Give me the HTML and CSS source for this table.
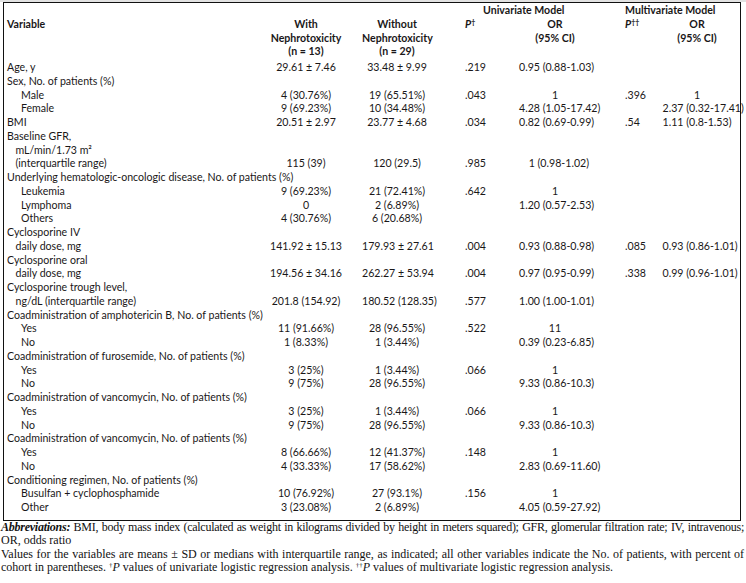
FILE: index.html
```html
<!DOCTYPE html>
<html lang="en">
<head>
<meta charset="utf-8">
<title>Table</title>
<link rel="stylesheet" href="styles.css">
</head>
<body>
<div class="strip"></div>
<table class="data">
<colgroup>
<col class="c1"><col class="c2"><col class="c3"><col class="c4"><col class="c5"><col class="c6"><col class="c7">
</colgroup>
<thead>
<tr class="h1">
<th></th><th></th><th></th>
<th colspan="2" class="uni">Univariate Model</th>
<th colspan="2" class="multi">Multivariate Model</th>
</tr>
<tr class="h2">
<th class="var">Variable</th>
<th class="ctr">With<br>Nephrotoxicity<br>(n = 13)</th>
<th class="ctr">Without<br>Nephrotoxicity<br>(n = 29)</th>
<th class="p"><i>P</i><sup>†</sup></th>
<th class="ctr">OR<br>(95% CI)</th>
<th class="pm"><i>P</i><sup>††</sup></th>
<th class="ctrm">OR<br>(95% CI)</th>
</tr>
</thead>
<tbody>
<tr><td class="var">Age, y</td><td class="ctr">29.61 ± 7.46</td><td class="ctr">33.48 ± 9.99</td><td class="p">.219</td><td class="or">0.95 (0.88-1.03)</td><td class="pm"></td><td class="orm"></td></tr>
<tr><td class="var" colspan="7">Sex, No. of patients (%)</td></tr>
<tr><td class="var sub">Male</td><td class="ctr">4 (30.76%)</td><td class="ctr">19 (65.51%)</td><td class="p">.043</td><td class="ctr">1</td><td class="pm">.396</td><td class="ctrm">1</td></tr>
<tr><td class="var sub">Female</td><td class="ctr">9 (69.23%)</td><td class="ctr">10 (34.48%)</td><td class="p"></td><td class="or">4.28 (1.05-17.42)</td><td class="pm"></td><td class="orm">2.37 (0.32-17.41)</td></tr>
<tr><td class="var">BMI</td><td class="ctr">20.51 ± 2.97</td><td class="ctr">23.77 ± 4.68</td><td class="p">.034</td><td class="or">0.82 (0.69-0.99)</td><td class="pm">.54</td><td class="orm">1.11 (0.8-1.53)</td></tr>
<tr><td class="var" colspan="7">Baseline GFR,</td></tr>
<tr><td class="var cont" colspan="7">mL/min/1.73 m²</td></tr>
<tr><td class="var cont">(interquartile range)</td><td class="ctr">115 (39)</td><td class="ctr">120 (29.5)</td><td class="p">.985</td><td class="orr">1 (0.98-1.02)</td><td class="pm"></td><td class="orm"></td></tr>
<tr><td class="var" colspan="7">Underlying hematologic-oncologic disease, No. of patients (%)</td></tr>
<tr><td class="var sub">Leukemia</td><td class="ctr">9 (69.23%)</td><td class="ctr">21 (72.41%)</td><td class="p">.642</td><td class="ctr">1</td><td class="pm"></td><td class="orm"></td></tr>
<tr><td class="var sub">Lymphoma</td><td class="ctr">0</td><td class="ctr">2 (6.89%)</td><td class="p"></td><td class="or">1.20 (0.57-2.53)</td><td class="pm"></td><td class="orm"></td></tr>
<tr><td class="var sub">Others</td><td class="ctr">4 (30.76%)</td><td class="ctr">6 (20.68%)</td><td class="p"></td><td class="or"></td><td class="pm"></td><td class="orm"></td></tr>
<tr><td class="var" colspan="7">Cyclosporine IV</td></tr>
<tr><td class="var cont">daily dose, mg</td><td class="ctr">141.92 ± 15.13</td><td class="ctr">179.93 ± 27.61</td><td class="p">.004</td><td class="or">0.93 (0.88-0.98)</td><td class="pm">.085</td><td class="orm">0.93 (0.86-1.01)</td></tr>
<tr><td class="var" colspan="7">Cyclosporine oral</td></tr>
<tr><td class="var cont">daily dose, mg</td><td class="ctr">194.56 ± 34.16</td><td class="ctr">262.27 ± 53.94</td><td class="p">.004</td><td class="or">0.97 (0.95-0.99)</td><td class="pm">.338</td><td class="orm">0.99 (0.96-1.01)</td></tr>
<tr><td class="var" colspan="7">Cyclosporine trough level,</td></tr>
<tr><td class="var cont">ng/dL (interquartile range)</td><td class="ctr">201.8 (154.92)</td><td class="ctr">180.52 (128.35)</td><td class="p">.577</td><td class="or">1.00 (1.00-1.01)</td><td class="pm"></td><td class="orm"></td></tr>
<tr><td class="var" colspan="7">Coadministration of amphotericin B, No. of patients (%)</td></tr>
<tr><td class="var sub">Yes</td><td class="ctr">11 (91.66%)</td><td class="ctr">28 (96.55%)</td><td class="p">.522</td><td class="ctr">11</td><td class="pm"></td><td class="orm"></td></tr>
<tr><td class="var sub">No</td><td class="ctr">1 (8.33%)</td><td class="ctr">1 (3.44%)</td><td class="p"></td><td class="or">0.39 (0.23-6.85)</td><td class="pm"></td><td class="orm"></td></tr>
<tr><td class="var" colspan="7">Coadministration of furosemide, No. of patients (%)</td></tr>
<tr><td class="var sub">Yes</td><td class="ctr">3 (25%)</td><td class="ctr">1 (3.44%)</td><td class="p">.066</td><td class="ctr">1</td><td class="pm"></td><td class="orm"></td></tr>
<tr><td class="var sub">No</td><td class="ctr">9 (75%)</td><td class="ctr">28 (96.55%)</td><td class="p"></td><td class="or">9.33 (0.86-10.3)</td><td class="pm"></td><td class="orm"></td></tr>
<tr><td class="var" colspan="7">Coadministration of vancomycin, No. of patients (%)</td></tr>
<tr><td class="var sub">Yes</td><td class="ctr">3 (25%)</td><td class="ctr">1 (3.44%)</td><td class="p">.066</td><td class="ctr">1</td><td class="pm"></td><td class="orm"></td></tr>
<tr><td class="var sub">No</td><td class="ctr">9 (75%)</td><td class="ctr">28 (96.55%)</td><td class="p"></td><td class="or">9.33 (0.86-10.3)</td><td class="pm"></td><td class="orm"></td></tr>
<tr><td class="var" colspan="7">Coadministration of vancomycin, No. of patients (%)</td></tr>
<tr><td class="var sub">Yes</td><td class="ctr">8 (66.66%)</td><td class="ctr">12 (41.37%)</td><td class="p">.148</td><td class="ctr">1</td><td class="pm"></td><td class="orm"></td></tr>
<tr><td class="var sub">No</td><td class="ctr">4 (33.33%)</td><td class="ctr">17 (58.62%)</td><td class="p"></td><td class="or">2.83 (0.69-11.60)</td><td class="pm"></td><td class="orm"></td></tr>
<tr><td class="var" colspan="7">Conditioning regimen, No. of patients (%)</td></tr>
<tr><td class="var sub">Busulfan + cyclophosphamide</td><td class="ctr">10 (76.92%)</td><td class="ctr">27 (93.1%)</td><td class="p">.156</td><td class="ctr">1</td><td class="pm"></td><td class="orm"></td></tr>
<tr class="last"><td class="var sub">Other</td><td class="ctr">3 (23.08%)</td><td class="ctr">2 (6.89%)</td><td class="p"></td><td class="or">4.05 (0.59-27.92)</td><td class="pm"></td><td class="orm"></td></tr>
</tbody>
</table>
<div class="notes">
<div class="line just tight"><b><i>Abbreviations:</i></b> BMI, body mass index (calculated as weight in kilograms divided by height in meters squared); GFR, glomerular filtration rate; IV, intravenous;</div>
<div class="line">OR, odds ratio</div>
<div class="line just">Values for the variables are means ± SD or medians with interquartile range, as indicated; all other variables indicate the No. of patients, with percent of</div>
<div class="line">cohort in parentheses. <sup>†</sup><i>P</i> values of univariate logistic regression analysis. <sup>††</sup><i>P</i> values of multivariate logistic regression analysis.</div>
</div>
</body>
</html>
```
FILE: styles.css
```css
html, body {
  margin: 0;
  padding: 0;
  background: #ffffff;
}

body {
  width: 746px;
  color: #1a1718;
  font-family: Lato, "Open Sans", sans-serif;
}

.strip {
  height: 2px;
  background: #e2e2e2;
}

.data {
  margin-left: 3px;
  width: 738px;
  border: 1px solid #111;
  border-collapse: separate;
  border-spacing: 0;
  table-layout: fixed;
  font-size: 10.6px;
  line-height: 13.75px;
  padding: 1px 0 5px 0;
}

.c1 { width: 246px; }
.c2 { width: 112px; }
.c3 { width: 70px; }
.c4 { width: 73px; }
.c5 { width: 100px; }
.c6 { width: 45px; }
.c7 { width: 90px; }

.data th,
.data td {
  padding: 0;
  white-space: nowrap;
  vertical-align: top;
  font-weight: normal;
  text-align: left;
}

.data th {
  font-weight: 700;
}

.h2 th {
  padding-bottom: 2px;
}

.data sup {
  font-size: 7px;
  line-height: 0;
  vertical-align: 3px;
}

.data .uni {
  padding-left: 51px;
}

.data .multi {
  padding-left: 20px;
}

.data .var {
  padding-left: 3px;
}

.data .var.sub {
  padding-left: 17px;
}

.data .var.cont {
  padding-left: 11.5px;
}

.data .ctr {
  text-align: center;
}

.data .p {
  padding-left: 33px;
}

.data .or {
  padding-left: 14px;
}

.data .orr {
  text-align: right;
  padding-right: 16px;
}

.data .pm {
  padding-left: 20px;
}

.data .orm {
  padding-left: 12.5px;
}

.data .ctrm {
  text-align: center;
  padding-left: 4px;
}

.notes {
  margin-left: 1px;
  width: 743px;
  font-family: "Liberation Serif", "Times New Roman", serif;
  font-size: 12px;
  line-height: 13.5px;
  color: #111;
}

.notes .line {
  white-space: nowrap;
  height: 13.5px;
}

.notes .just {
  text-align: justify;
  text-align-last: justify;
}

.notes .tight {
  letter-spacing: -0.25px;
}

.notes sup {
  font-size: 7px;
  line-height: 0;
  vertical-align: 4px;
}
```
